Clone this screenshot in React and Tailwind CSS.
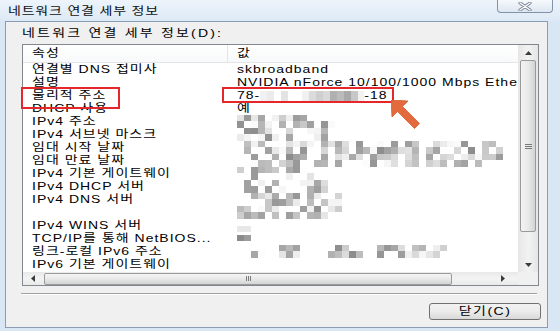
import React from "react";

const FONT = "font-['Liberation_Sans','Noto_Sans_CJK_KR',sans-serif]";

function rnd(seed, i, j) {
  let x = (Math.imul(seed + 1, 374761393) + Math.imul(i + 7, 668265263) + Math.imul(j + 3, 1274126177)) >>> 0;
  x = Math.imul(x ^ (x >>> 13), 1274126177) >>> 0;
  x ^= x >>> 16;
  return (x % 1000) / 1000;
}

function Mosaic({ w, h = 13, seed = 1, lo = 140, hi = 235 }) {
  const cols = Math.ceil(w / 7);
  const subRows = h >= 12 ? [6, h - 6] : [h];
  return (
    <div className="flex flex-col shrink-0 overflow-hidden" style={{ width: w, height: h }}>
      {subRows.map((rh, r) => (
        <div key={r} className="flex shrink-0" style={{ height: rh }}>
          {Array.from({ length: cols }).map((_, c) => {
            const g = Math.round(hi - rnd(seed, r, c) * (hi - lo));
            return (
              <div
                key={c}
                className="shrink-0 h-full w-[7px]"
                style={{ background: `rgb(${g},${g},${g})` }}
              />
            );
          })}
        </div>
      ))}
    </div>
  );
}

const rows = [
  { k: "연결별 DNS 접미사", v: "skbroadband" },
  { k: "설명", v: "NVIDIA nForce 10/100/1000 Mbps Ethernet" },
  { k: "물리적 주소", mac: true },
  { k: "DHCP 사용", v: "예" },
  { k: "IPv4 주소", m: 98, s: 11 },
  { k: "IPv4 서브넷 마스크", m: 98, s: 12 },
  { k: "임대 시작 날짜", m: 266, s: 13 },
  { k: "임대 만료 날짜", m: 266, s: 14 },
  { k: "IPv4 기본 게이트웨이", m: 77, s: 15 },
  { k: "IPv4 DHCP 서버", m: 91, s: 16 },
  { k: "IPv4 DNS 서버", m: 105, s: 17 },
  { k: "", m: 105, s: 18 },
  { k: "IPv4 WINS 서버", small: "light" },
  { k: "TCP/IP를 통해 NetBIOS...", small: "dark" },
  { k: "링크-로컬 IPv6 주소", m: 210, s: 19 },
  { k: "IPv6 기본 게이트웨이" },
];

function Tri({ dir }) {
  const pts = {
    up: "0,4 3.5,0 7,4",
    down: "0,0 3.5,4 7,0",
    left: "4,0 0,3.5 4,7",
    right: "0,0 4,3.5 0,7",
  }[dir];
  const vert = dir === "up" || dir === "down";
  return (
    <svg width={vert ? 7 : 4} height={vert ? 4 : 7} viewBox={vert ? "0 0 7 4" : "0 0 4 7"}>
      <polygon points={pts} fill="#3c3c3c" />
    </svg>
  );
}

function T({ children, className = "" }) {
  return (
    <span className={`inline-block scale-y-[0.8] origin-center text-[14px] leading-[13px] whitespace-nowrap ${className}`}>
      {children}
    </span>
  );
}

function Row({ r }) {
  return (
    <div className="flex h-[13px] shrink-0">
      <div className="w-[205px] shrink-0 pl-[9px] overflow-hidden flex items-center">
        <T className="tracking-[1px]">{r.k}</T>
      </div>
      <div className="flex-1 pl-[9px] whitespace-nowrap overflow-hidden flex items-center">
        {r.v && <T className="tracking-[1px]">{r.v}</T>}
        {r.mac && (
          <>
            <T className="tracking-[1px]">78-</T>
            <Mosaic w={104} h={10} seed={5} lo={165} hi={228} />
            <T className="tracking-[1px]">-18</T>
          </>
        )}
        {r.m && <Mosaic w={r.m} h={13} seed={r.s} />}
        {r.small === "light" && <div className="self-end w-[14px] h-[6px] bg-[#e8e8e8]" />}
        {r.small === "dark" && (
          <div className="self-start mt-[3px] w-[14px] h-[6px] flex">
            <div className="w-[7px] bg-[#8a8a8a]" />
            <div className="w-[7px] bg-[#9c9c9c]" />
          </div>
        )}
      </div>
    </div>
  );
}

export default function App() {
  return (
    <div className={`relative w-[560px] h-[331px] overflow-hidden bg-[#d9e7f5] text-black ${FONT}`}>
      {/* title bar */}
      <div className="h-[21px] flex items-start bg-gradient-to-b from-[#edf4fb] to-[#dce9f6]">
        <div className="pl-[8px] pt-[5px] h-[18px] flex items-start text-[#111]">
          <T className="tracking-[0.8px]">네트워크 연결 세부 정보</T>
        </div>
        <div className="ml-auto mr-[7px] w-[56px] h-[13px] border border-t-0 border-[#8193ab] rounded-b-[4px] bg-gradient-to-b from-[#f6f9fc] to-[#dde6f0] flex items-center justify-center">
          <svg width="14" height="9" viewBox="0 0 14 9">
            <path d="M2 1 L12 8 M12 1 L2 8" stroke="#7a8698" strokeWidth="3.2" strokeLinecap="round" />
            <path d="M2 1 L12 8 M12 1 L2 8" stroke="#ffffff" strokeWidth="1.4" strokeLinecap="round" />
          </svg>
        </div>
      </div>

      {/* dialog panel */}
      <div className="ml-[5px] mr-[12px] h-[307px] border border-[#8d9cb0] bg-[#f0f0f0] flex flex-col">
        <div className="h-[22px] shrink-0 pl-[16px] pt-[5px] flex items-start">
          <T className="tracking-[2.2px]">네트워크 연결 세부 정보(D):</T>
        </div>

        <div className="ml-[16px] w-[517px] h-[242px] border border-[#828790] bg-white flex flex-col shrink-0">
          <div className="flex h-[227px] shrink-0">
            <div className="w-[495px] shrink-0 flex flex-col overflow-hidden">
              <div className="flex h-[18px] shrink-0 items-center border-b border-[#e5e5e5] bg-gradient-to-b from-white to-[#f8f9fa]">
                <div className="w-[204px] shrink-0 pl-[9px] flex items-center">
                  <T className="tracking-[1px]">속성</T>
                </div>
                <div className="w-px h-full bg-[#e5e5e5]" />
                <div className="pl-[9px] flex items-center">
                  <T>값</T>
                </div>
              </div>
              {rows.map((r, i) => (
                <Row key={i} r={r} />
              ))}
            </div>
            {/* vertical scrollbar */}
            <div className="w-[20px] shrink-0 bg-gradient-to-r from-[#e6e6e6] via-[#f2f2f2] to-[#e6e6e6] flex flex-col">
              <div className="h-[15px] flex items-center justify-center">
                <Tri dir="up" />
              </div>
              <div className="mx-[2px] h-[172px] border border-[#9a9a9a] rounded-[2px] bg-gradient-to-r from-[#f3f3f3] via-[#e9e9e9] to-[#d3d3d3] flex items-center justify-center">
                <div className="flex flex-col gap-[1px]">
                  <div className="w-[7px] h-px bg-[#7a7a7a]" />
                  <div className="w-[7px] h-px bg-[#7a7a7a]" />
                  <div className="w-[7px] h-px bg-[#7a7a7a]" />
                </div>
              </div>
              <div className="flex-1" />
              <div className="h-[15px] flex items-center justify-center">
                <Tri dir="down" />
              </div>
            </div>
          </div>
          {/* horizontal scrollbar */}
          <div className="flex h-[13px] shrink-0">
            <div className="w-[495px] shrink-0 bg-gradient-to-b from-[#e9e9e9] via-[#f3f3f3] to-[#e9e9e9] flex items-center">
              <div className="w-[20px] h-full flex items-center justify-center shrink-0">
                <Tri dir="left" />
              </div>
              <div className="ml-[1px] w-[408px] h-[12px] border border-[#9a9a9a] rounded-[2px] bg-gradient-to-b from-[#f5f5f5] via-[#e8e8e8] to-[#d4d4d4] flex items-center justify-center shrink-0">
                <div className="flex gap-[1px]">
                  <div className="w-px h-[5px] bg-[#7a7a7a]" />
                  <div className="w-px h-[5px] bg-[#7a7a7a]" />
                  <div className="w-px h-[5px] bg-[#7a7a7a]" />
                </div>
              </div>
              <div className="flex-1" />
              <div className="w-[30px] h-full flex items-center justify-center shrink-0">
                <Tri dir="right" />
              </div>
            </div>
            <div className="w-[20px] shrink-0 bg-[#f0f0f0]" />
          </div>
        </div>

        <div className="mt-[7px] ml-[15px] w-[516px] border-t border-[#a0a0a0] border-b border-b-white" />

        <div className="mt-[8px] self-end mr-[6px] w-[112px] h-[17px] border border-[#707070] rounded-[3px] bg-gradient-to-b from-[#f2f2f2] via-[#ebebeb] to-[#d9d9d9] flex items-center justify-center">
          <T className="tracking-[1.5px]">닫기(C)</T>
        </div>
      </div>

      {/* annotations */}
      <div className="absolute left-[21px] top-[87px] w-[99px] h-[22px] border-2 border-[#e5262b]" />
      <div className="absolute left-[222px] top-[87px] w-[172px] h-[16px] border-2 border-[#e5262b]" />
      <svg className="absolute left-[391px] top-[100px]" width="30" height="30" viewBox="0 0 30 30">
        <polygon
          points="0,0 17,1 11.5,6.5 28.5,23.5 23.5,28.5 6.5,11.5 1,17"
          fill="#e26a3c"
          stroke="#d85a2c"
          strokeWidth="0.8"
        />
      </svg>
    </div>
  );
}
